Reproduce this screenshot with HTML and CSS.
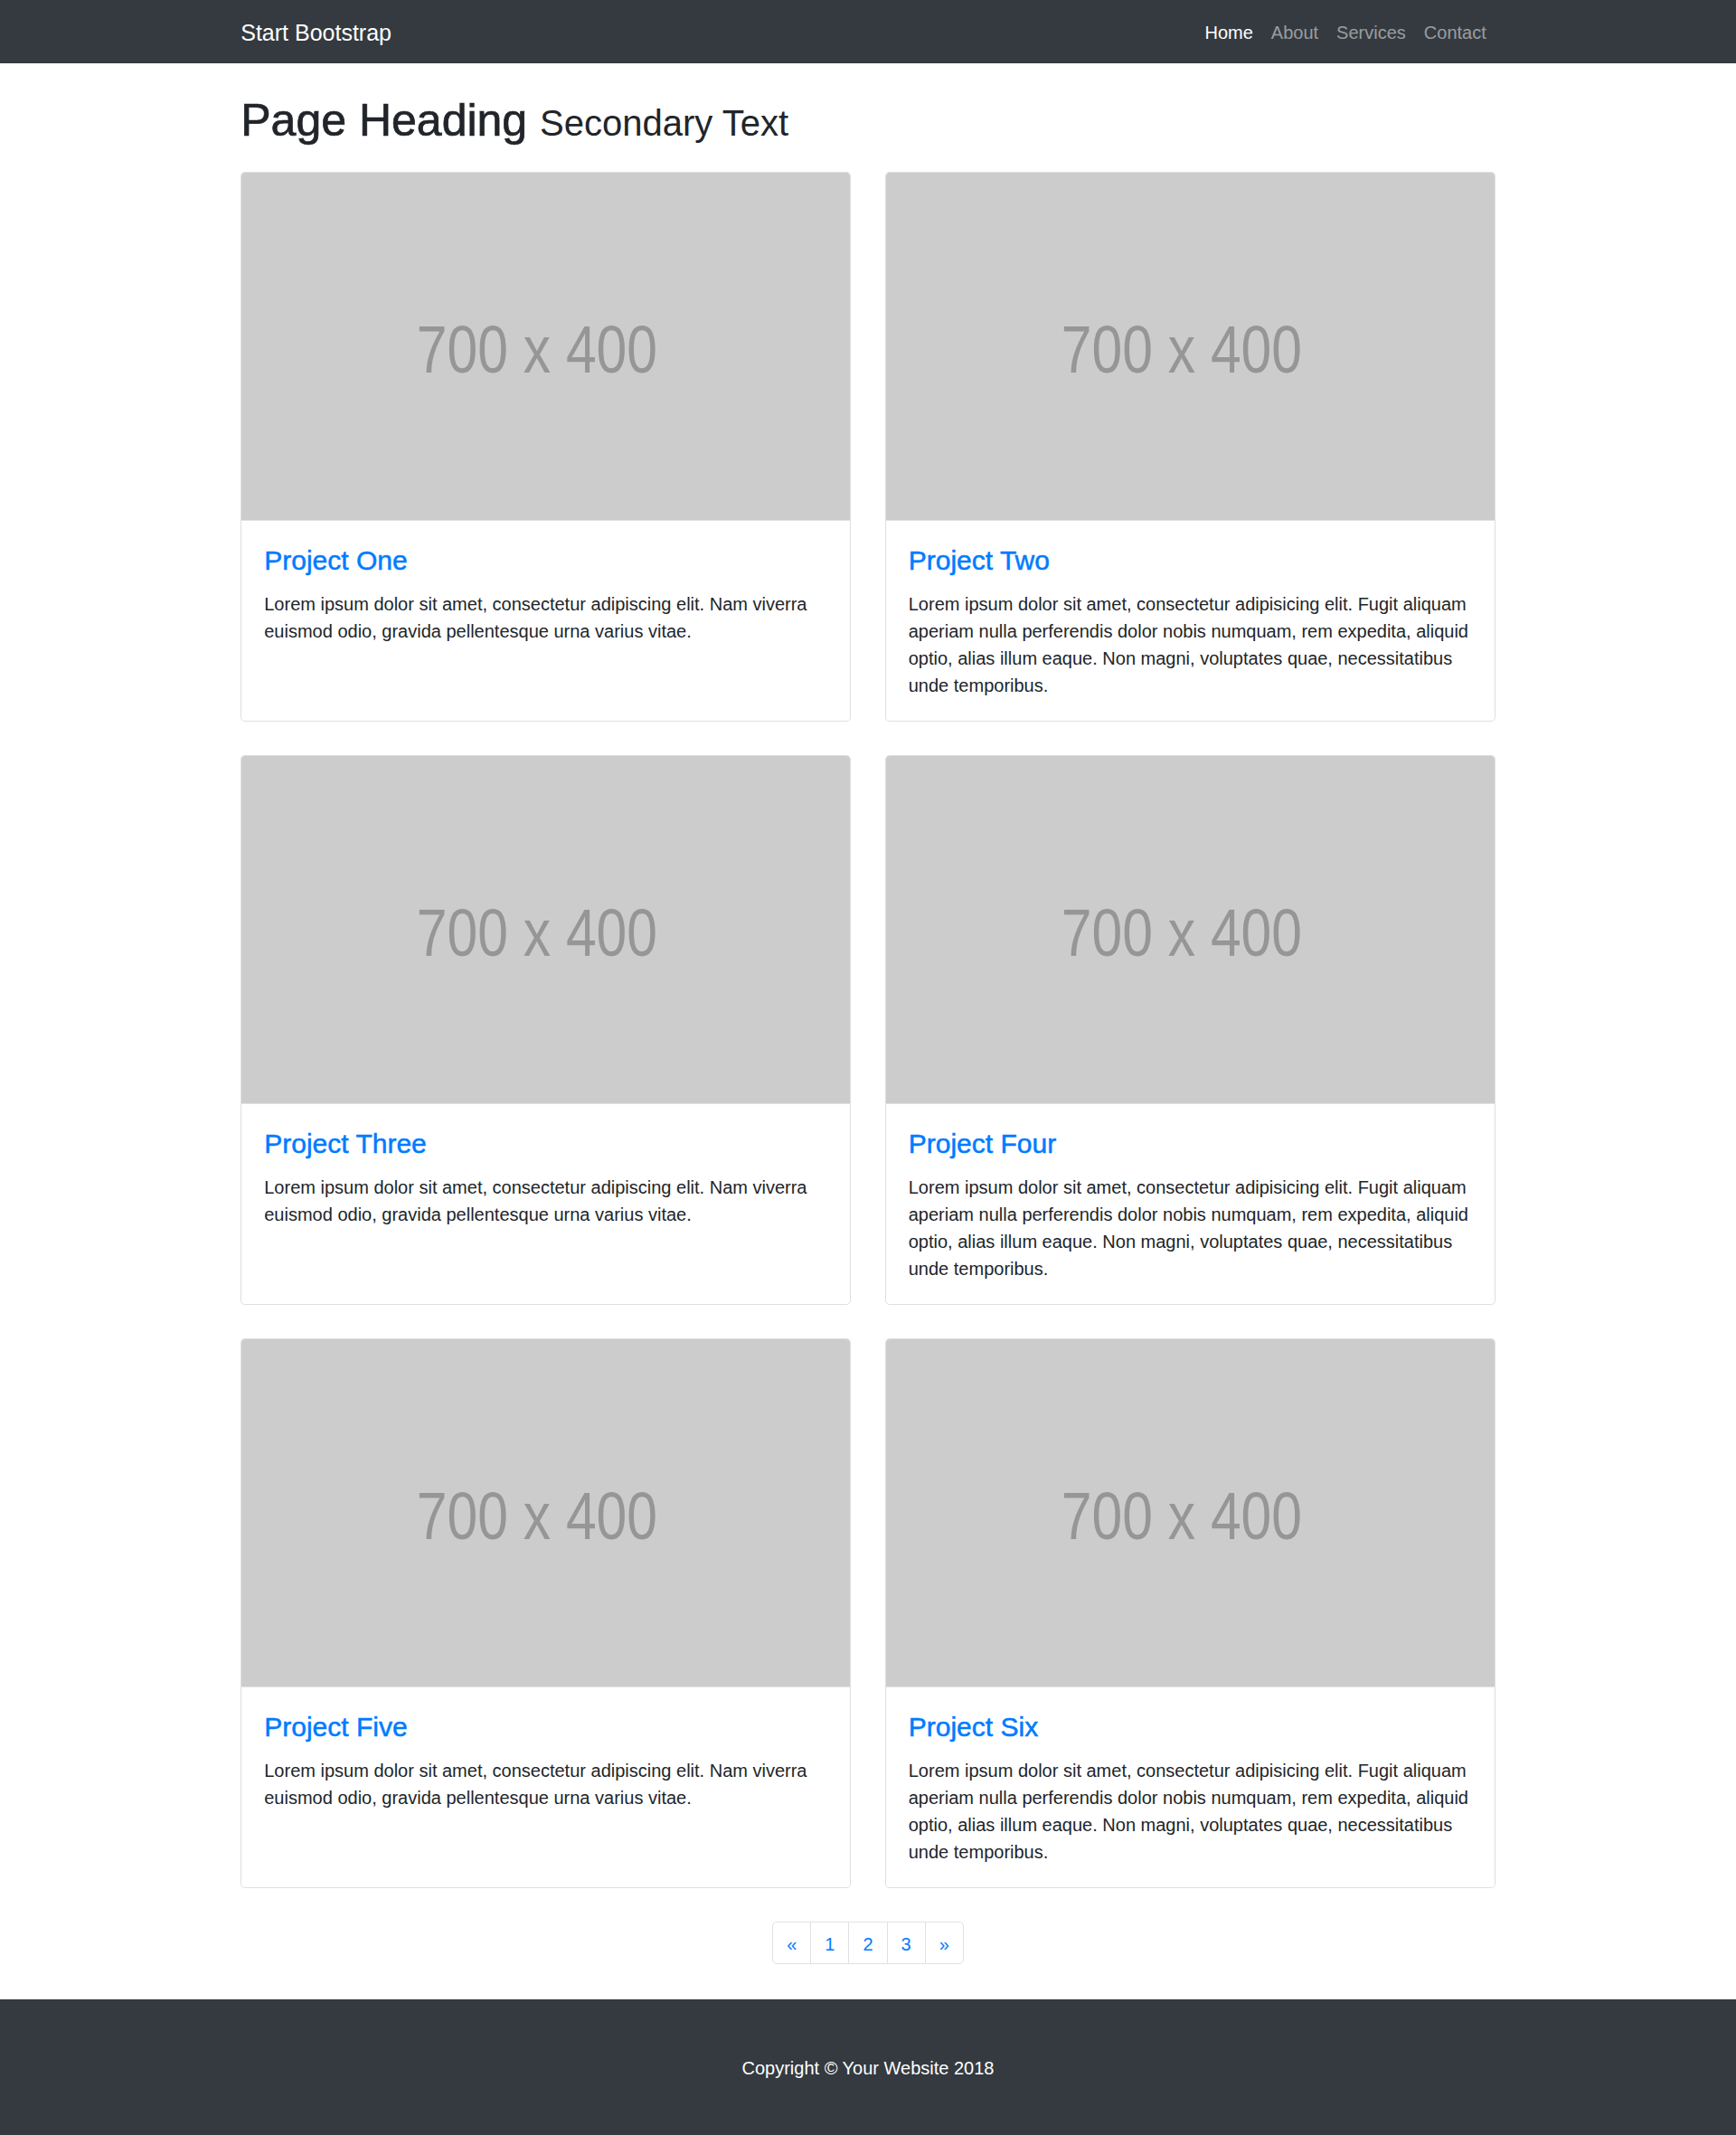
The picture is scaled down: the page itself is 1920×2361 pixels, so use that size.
FILE: index.html
```html
<!DOCTYPE html>
<html lang="en">
<head>
<meta charset="utf-8">
<title>Start Bootstrap - Portfolio</title>
<link rel="stylesheet" href="styles.css">
</head>
<body>
<nav class="navbar">
  <div class="container nav-inner">
    <a class="brand" href="#">Start Bootstrap</a>
    <ul class="nav-links">
      <li><a class="nav-link active" href="#">Home</a></li>
      <li><a class="nav-link" href="#">About</a></li>
      <li><a class="nav-link" href="#">Services</a></li>
      <li><a class="nav-link" href="#">Contact</a></li>
    </ul>
  </div>
</nav>

<main class="container">
  <h1 class="page-title">Page Heading <small>Secondary Text</small></h1>

  <div class="grid">
    <div class="card">
      <svg class="card-img" viewBox="0 0 700 400" preserveAspectRatio="none"><rect width="700" height="400" fill="#cccccc"/><text x="340" y="230" text-anchor="middle" font-family="Liberation Sans, Arial, sans-serif" font-size="77" fill="#969696" textLength="277" lengthAdjust="spacingAndGlyphs">700 x 400</text></svg>
      <div class="card-body">
        <h4 class="card-title"><a href="#">Project One</a></h4>
        <p class="card-text">Lorem ipsum dolor sit amet, consectetur adipiscing elit. Nam viverra euismod odio, gravida pellentesque urna varius vitae.</p>
      </div>
    </div>
    <div class="card">
      <svg class="card-img" viewBox="0 0 700 400" preserveAspectRatio="none"><rect width="700" height="400" fill="#cccccc"/><text x="340" y="230" text-anchor="middle" font-family="Liberation Sans, Arial, sans-serif" font-size="77" fill="#969696" textLength="277" lengthAdjust="spacingAndGlyphs">700 x 400</text></svg>
      <div class="card-body">
        <h4 class="card-title"><a href="#">Project Two</a></h4>
        <p class="card-text">Lorem ipsum dolor sit amet, consectetur adipisicing elit. Fugit aliquam aperiam nulla perferendis dolor nobis numquam, rem expedita, aliquid optio, alias illum eaque. Non magni, voluptates quae, necessitatibus unde temporibus.</p>
      </div>
    </div>
    <div class="card">
      <svg class="card-img" viewBox="0 0 700 400" preserveAspectRatio="none"><rect width="700" height="400" fill="#cccccc"/><text x="340" y="230" text-anchor="middle" font-family="Liberation Sans, Arial, sans-serif" font-size="77" fill="#969696" textLength="277" lengthAdjust="spacingAndGlyphs">700 x 400</text></svg>
      <div class="card-body">
        <h4 class="card-title"><a href="#">Project Three</a></h4>
        <p class="card-text">Lorem ipsum dolor sit amet, consectetur adipiscing elit. Nam viverra euismod odio, gravida pellentesque urna varius vitae.</p>
      </div>
    </div>
    <div class="card">
      <svg class="card-img" viewBox="0 0 700 400" preserveAspectRatio="none"><rect width="700" height="400" fill="#cccccc"/><text x="340" y="230" text-anchor="middle" font-family="Liberation Sans, Arial, sans-serif" font-size="77" fill="#969696" textLength="277" lengthAdjust="spacingAndGlyphs">700 x 400</text></svg>
      <div class="card-body">
        <h4 class="card-title"><a href="#">Project Four</a></h4>
        <p class="card-text">Lorem ipsum dolor sit amet, consectetur adipisicing elit. Fugit aliquam aperiam nulla perferendis dolor nobis numquam, rem expedita, aliquid optio, alias illum eaque. Non magni, voluptates quae, necessitatibus unde temporibus.</p>
      </div>
    </div>
    <div class="card">
      <svg class="card-img" viewBox="0 0 700 400" preserveAspectRatio="none"><rect width="700" height="400" fill="#cccccc"/><text x="340" y="230" text-anchor="middle" font-family="Liberation Sans, Arial, sans-serif" font-size="77" fill="#969696" textLength="277" lengthAdjust="spacingAndGlyphs">700 x 400</text></svg>
      <div class="card-body">
        <h4 class="card-title"><a href="#">Project Five</a></h4>
        <p class="card-text">Lorem ipsum dolor sit amet, consectetur adipiscing elit. Nam viverra euismod odio, gravida pellentesque urna varius vitae.</p>
      </div>
    </div>
    <div class="card">
      <svg class="card-img" viewBox="0 0 700 400" preserveAspectRatio="none"><rect width="700" height="400" fill="#cccccc"/><text x="340" y="230" text-anchor="middle" font-family="Liberation Sans, Arial, sans-serif" font-size="77" fill="#969696" textLength="277" lengthAdjust="spacingAndGlyphs">700 x 400</text></svg>
      <div class="card-body">
        <h4 class="card-title"><a href="#">Project Six</a></h4>
        <p class="card-text">Lorem ipsum dolor sit amet, consectetur adipisicing elit. Fugit aliquam aperiam nulla perferendis dolor nobis numquam, rem expedita, aliquid optio, alias illum eaque. Non magni, voluptates quae, necessitatibus unde temporibus.</p>
      </div>
    </div>
  </div>

  <ul class="pagination">
    <li><a class="page-link" href="#">&laquo;</a></li>
    <li><a class="page-link" href="#">1</a></li>
    <li><a class="page-link" href="#">2</a></li>
    <li><a class="page-link" href="#">3</a></li>
    <li><a class="page-link" href="#">&raquo;</a></li>
  </ul>
</main>

<footer class="footer">
  <p class="copyright">Copyright &copy; Your Website 2018</p>
</footer>
</body>
</html>
```

FILE: styles.css
```css
* { box-sizing: border-box; }

html, body {
  margin: 0;
  padding: 0;
}

body {
  font-family: "Liberation Sans", Arial, sans-serif;
  font-size: 20px;
  line-height: 30px;
  color: #212529;
  background: #fff;
}

a { text-decoration: none; }

.container {
  width: 1425px;
  margin: 0 auto;
  padding: 0 18.75px;
}

/* Navbar */
.navbar {
  background: #343a40;
  height: 70px;
  padding: 10px 0;
}

.nav-inner {
  display: flex;
  align-items: center;
  justify-content: space-between;
  height: 50px;
}

.brand {
  display: block;
  color: #fff;
  font-size: 25px;
  line-height: 37.5px;
  padding: 7.5px 0 5px;
}

.nav-links {
  display: flex;
  list-style: none;
  margin: 0;
  padding: 0;
}

.nav-link {
  display: block;
  padding: 11px 10px 9px;
  color: rgba(255, 255, 255, 0.5);
  font-size: 20px;
  line-height: 30px;
}

.nav-link.active { color: #fff; }

/* Heading */
.page-title {
  margin: 32.5px 0 27.5px;
  height: 60px;
  font-size: 50px;
  line-height: 60px;
  font-weight: 400;
  -webkit-text-stroke: 0.7px #212529;
}

.page-title small {
  font-size: 40px;
  line-height: 1;
  font-weight: 400;
  -webkit-text-stroke: 0;
}

/* Cards */
.grid {
  display: grid;
  grid-template-columns: 1fr 1fr;
  column-gap: 37.5px;
  row-gap: 37.5px;
}

.card {
  display: flex;
  flex-direction: column;
  border: 1px solid rgba(0, 0, 0, 0.125);
  border-radius: 5px;
  overflow: hidden;
  background: #fff;
}

.card-img {
  display: block;
  width: 100%;
  height: auto;
  aspect-ratio: 7 / 4;
}

.card-body {
  flex: 1;
  padding: 26.5px 25px 23.5px;
}

.card-title {
  margin: 0 0 15px;
  font-size: 30px;
  line-height: 36px;
  font-weight: 400;
}

.card-title a {
  color: #007bff;
  -webkit-text-stroke: 0.5px #007bff;
}

.card-text {
  margin: 0;
}

/* Pagination */
.pagination {
  display: flex;
  justify-content: center;
  list-style: none;
  padding: 0;
  margin: 37.5px 0 38.5px;
}

.page-link {
  display: block;
  padding: 11.5px 15px 8.5px;
  line-height: 25px;
  font-size: 20px;
  color: #007bff;
  border: 1px solid #dee2e6;
  margin-left: -1px;
  background: #fff;
}

.pagination li:first-child .page-link {
  margin-left: 0;
  border-radius: 5px 0 0 5px;
}

.pagination li:last-child .page-link {
  border-radius: 0 5px 5px 0;
}

/* Footer */
.footer {
  background: #343a40;
  padding: 61.5px 0 58.5px;
}

.copyright {
  margin: 0;
  text-align: center;
  color: #fff;
  font-size: 20px;
  line-height: 30px;
}
```
